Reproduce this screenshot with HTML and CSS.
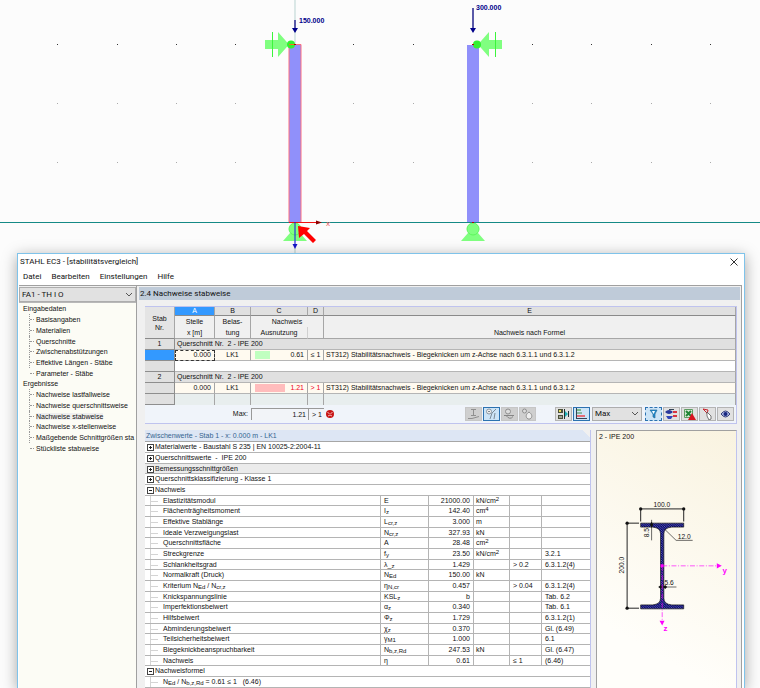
FILE: index.html
```html
<!DOCTYPE html>
<html lang="de">
<head>
  <meta charset="UTF-8" />
  <title>STAHL EC3 - [stabilitätsvergleich]</title>
  <link rel="stylesheet" href="styles.css">
</head>
<body>
  <svg class="scene" viewBox="0 0 760 253" role="img" aria-label="Modell">
    <!-- grid points -->
    <g class="grid-points">
      <path d="M57 44.500h1M117 44.500h1M176 44.500h1M235 44.500h1M353 44.500h1M413 44.500h1M532 44.500h1M591 44.500h1M651 44.500h1M710 44.500h1" />
      <path class="faint" d="M57 103.500h1M117 103.500h1M176 103.500h1M235 103.500h1M353 103.500h1M413 103.500h1M532 103.500h1M591 103.500h1M651 103.500h1M710 103.500h1" />
      <path class="faint" d="M57 162.500h1M117 162.500h1M176 162.500h1M235 162.500h1M353 162.500h1M413 162.500h1M532 162.500h1M591 162.500h1M651 162.500h1M710 162.500h1" />
    </g>
    <path d="M295 0V253" stroke="#b9d3d1" />
    <!-- loads -->
    <path d="M295 20v9M473 8v21" stroke="#5a5aa8" stroke-width="2" />
    <g fill="#00008b">
      <path d="M292 28h6l-3 5zM470 28h6l-3 5z" />
      <text class="load" x="299" y="23">150.000</text>
      <text class="load" x="476" y="10">300.000</text>
    </g>
    <!-- lower supports -->
    <g fill="#80ff80" stroke="#5df75d">
      <path stroke="none" d="M283 241l7-8h10l7 8zM461 241l7-8h10l7 8z" />
      <circle cx="295" cy="229" r="6" />
      <circle cx="473" cy="229" r="6" />
    </g>
    <!-- columns -->
    <path d="M289 45h12v177h-12z" fill="#9090fa" />
    <path d="M467 45h12v177h-12z" fill="#9090fa" />
    <path d="M289 222V44.500h12V222" fill="none" stroke="#ff6f7c" />
    <path d="M0 222.500H760" stroke="#158a86" />
    <!-- upper supports -->
    <g fill="#80ff80">
      <path d="M265 40h13v-8l11 12.500-11 12.500v-8h-13zM502 40h-13v-8l-11 12.500 11 12.500v-8h13z" />
      <path d="M272.500 32v25M495.500 32v25" stroke="#3cf53c" />
      <circle cx="291" cy="44.500" r="4" fill="#32f032" />
      <circle cx="477" cy="44.500" r="4" fill="#32f032" />
    </g>
    <path d="M289 44.500h7" stroke="#ff6a20" />
    <path d="M294 44h2v1h-2zM472 44h2v1h-2zM472 222h2v1h-2z" fill="#b00000" />
    <!-- axes -->
    <path d="M289 222.500h28" stroke="#f01010" />
    <path d="M316 220.500l6 2-6 2z" fill="#8b0000" />
    <path d="M295 222v22" stroke="#1515e8" />
    <path d="M292.500 244h5l-2.500 5z" fill="#1515c8" />
    <text class="axis" x="326" y="226">x</text>
    <path d="M298 226l12 2-3 3 9 9-3 3-9-9-5 4z" fill="#f00" />
  </svg>

  <main class="window">
    <header class="titlebar">
      <span>STAHL EC3 - [stabilitätsvergleich]</span>
      <button class="close" aria-label="Schließen">
        <svg viewBox="0 0 8 8"><path d="M0.500 0.500l7 7M7.500 0.500l-7 7" stroke="#333" /></svg>
      </button>
    </header>
    <nav class="menu">
      <a href="#">Datei</a>
      <a href="#">Bearbeiten</a>
      <a href="#">Einstellungen</a>
      <a href="#">Hilfe</a>
    </nav>

    <div class="workspace">
      <aside class="sidebar">
        <select class="case-select" aria-label="Bemessungsfall">
          <option>FA1 - TH I O</option>
        </select>
        <div class="tree">
          <h2>Eingabedaten</h2>
          <ul>
            <li><a href="#">Basisangaben</a></li>
            <li><a href="#">Materialien</a></li>
            <li><a href="#">Querschnitte</a></li>
            <li><a href="#">Zwischenabstützungen</a></li>
            <li><a href="#">Effektive Längen - Stäbe</a></li>
            <li><a href="#">Parameter - Stäbe</a></li>
          </ul>
          <h2>Ergebnisse</h2>
          <ul>
            <li><a href="#">Nachweise lastfallweise</a></li>
            <li><a href="#">Nachweise querschnittsweise</a></li>
            <li><a href="#" class="active">Nachweise stabweise</a></li>
            <li><a href="#">Nachweise x-stellenweise</a></li>
            <li><a href="#">Maßgebende Schnittgrößen sta</a></li>
            <li><a href="#">Stückliste stabweise</a></li>
          </ul>
        </div>
      </aside>

      <section class="content">
        <h1>2.4 Nachweise stabweise</h1>

        <div class="results">
          <table class="result-table">
            <colgroup>
              <col class="c-nr"><col class="c-a"><col class="c-b"><col class="c-c"><col class="c-d"><col>
            </colgroup>
            <thead>
              <tr class="letters">
                <th rowspan="3" class="nr">Stab<br>Nr.</th>
                <th class="current">A</th><th>B</th><th>C</th><th>D</th><th>E</th>
              </tr>
              <tr class="captions">
                <th>Stelle</th><th>Belas-</th><th colspan="2">Nachweis</th><th></th>
              </tr>
              <tr class="captions last">
                <th>x [m]</th><th>tung</th><th class="split">Ausnutzung</th><th></th><th>Nachweis nach Formel</th>
              </tr>
            </thead>
            <tbody>
              <tr class="group"><th>1</th><td colspan="5">Querschnitt Nr.&nbsp; 2 - IPE 200</td></tr>
              <tr class="data">
                <th class="current"></th>
                <td class="num focus">0.000</td>
                <td class="mid">LK1</td>
                <td class="num ratio ok">0.61</td>
                <td class="mid">≤ 1</td>
                <td>ST312) Stabilitätsnachweis - Biegeknicken um z-Achse nach 6.3.1.1 und 6.3.1.2</td>
              </tr>
              <tr class="blank"><th></th><td colspan="5"></td></tr>
              <tr class="group"><th>2</th><td colspan="5">Querschnitt Nr.&nbsp; 2 - IPE 200</td></tr>
              <tr class="data">
                <th></th>
                <td class="num">0.000</td>
                <td class="mid">LK1</td>
                <td class="num ratio fail">1.21</td>
                <td class="mid over">&gt; 1</td>
                <td>ST312) Stabilitätsnachweis - Biegeknicken um z-Achse nach 6.3.1.1 und 6.3.1.2</td>
              </tr>
              <tr class="empty"><th></th><td></td><td></td><td></td><td></td><td></td></tr>
            </tbody>
          </table>

          <div class="summary">
            <label for="max-ratio">Max:</label>
            <input id="max-ratio" class="max" value="1.21" readonly>
            <input class="limit" value="&gt; 1" aria-label="Grenzwert" readonly>
            <svg class="sad" viewBox="0 0 8 8">
              <circle cx="4" cy="4" r="4" fill="#c81414" />
              <path d="M1.500 2.500l2 1M6.500 2.500l-2 1M2 6q2-2 4 0" stroke="#fff" stroke-width=".7" fill="none" />
            </svg>
            <div class="tools">
              <button class="off" aria-label="Querschnitt">
                <svg viewBox="0 0 15 12"><path d="M5 1.500h5M7.500 2v5M5 7.500h5M2 10.500h4M6 10.500l7-2" stroke="#8f8f8f" fill="none" /></svg>
              </button>
              <button class="on" aria-label="Schnittgrößen">
                <svg viewBox="0 0 15 12"><circle cx="5" cy="3.500" r="2.500" fill="#eee" stroke="#8b98a3" /><path d="M4 3.500h2M6 11l2-6 4-4M10 11l1-6" stroke="#7d8b96" fill="none" /></svg>
              </button>
              <button class="off" aria-label="Stab">
                <svg viewBox="0 0 15 12"><circle cx="6" cy="3.500" r="2.500" fill="#ddd" stroke="#8f8f8f" /><path d="M2 7.500h10M4 7.500q4 5 7 1" stroke="#858585" fill="none" /></svg>
              </button>
              <button class="off" aria-label="Stabsatz">
                <svg viewBox="0 0 15 12"><circle cx="4.500" cy="3" r="2" fill="#ddd" stroke="#8f8f8f" /><path d="M8 11c-3-2-2-5 1-7 3 2 4 5 1 7z" fill="#eee" stroke="#8f8f8f" /></svg>
              </button>
              <button class="second" aria-label="Ergebnisse">
                <svg viewBox="0 0 15 12"><path d="M2 1h5v4H2zM2 7h5v4H2z" fill="#4b503a" /><path d="M3 2h2v2H3z" fill="#e8dc5a" /><path d="M3 9h3" stroke="#eee" /><path d="M8.500 1v10M12.500 3v6" stroke="#233" /><path d="M9 3l3 3-3 3z" fill="#1db2b8" /></svg>
              </button>
              <button class="on" aria-label="Ergebnisverlauf">
                <svg viewBox="0 0 15 12"><path d="M2.500 0v11" stroke="#345" /><path d="M3 1h4v2H3z" fill="#79b98b" /><path d="M3 4h5v2H3z" fill="#87b8a2" /><path d="M3 7h8v2H3z" fill="#e46e78" /><path d="M3 10.500h10" stroke="#345" /></svg>
              </button>
              <select aria-label="Filterwert"><option>Max</option></select>
              <button class="on dotted" aria-label="Filter">
                <svg viewBox="0 0 15 12"><path d="M4 2h7L9 6v4l-2-1V6z" fill="#258ed0" stroke="#19608f" stroke-width=".6" /><path d="M6 3h3L7.500 6z" fill="#fff" /></svg>
              </button>
              <button aria-label="Farbskala">
                <svg viewBox="0 0 15 12"><path d="M1 4q4-4 8 0-4 4-8 0z" fill="#29379a" /><path d="M2 8h7l-2 3H4z" fill="#3145b8" /><path d="M9 4h4M9 8h4" stroke="#d83440" stroke-width="2" /><path d="M5 1.500h5" stroke="#345" /></svg>
              </button>
              <button aria-label="Excel-Export">
                <svg viewBox="0 0 15 12"><path d="M2.500 1.500h8v8h-8z" fill="#dcebd9" stroke="#5c9c62" /><path d="M4 3l5 5M9 3L4 8" stroke="#218536" stroke-width="2" /><path d="M10 5l4 7H6z" fill="#d81420" /></svg>
              </button>
              <button aria-label="Auswahl">
                <svg viewBox="0 0 15 12"><path d="M3 1l5 1-1 4M3 1l4 4" stroke="#c8242c" fill="none" /><path d="M7 4l4 4v3l-2 1-2-4z" fill="#fff" stroke="#555" stroke-width=".8" /></svg>
              </button>
              <button aria-label="Ansicht">
                <svg viewBox="0 0 15 12"><path d="M3 6q4.500-6 9 0-4.500 6-9 0z" fill="#a7b1dd" stroke="#36427e" /><circle cx="7.500" cy="6" r="2" fill="#162680" /></svg>
              </button>
            </div>
          </div>
        </div>

        <div class="lower">
          <div class="details">
            <h2>Zwischenwerte - Stab 1 - x: 0.000 m - LK1</h2>
            <table class="detail-table">
              <colgroup>
                <col><col class="d-sym"><col class="d-val"><col class="d-unit"><col class="d-cond"><col class="d-ref">
              </colgroup>
              <tbody>
                <tr class="head"><td colspan="6"><button class="toggle" aria-label="Öffnen"></button>Materialwerte - Baustahl S 235 | EN 10025-2:2004-11</td></tr>
                <tr class="head"><td colspan="6"><button class="toggle" aria-label="Öffnen"></button>Querschnittswerte&nbsp; -&nbsp; IPE 200</td></tr>
                <tr class="head shaded"><td colspan="6"><button class="toggle" aria-label="Öffnen"></button>Bemessungsschnittgrößen</td></tr>
                <tr class="head"><td colspan="6"><button class="toggle" aria-label="Öffnen"></button>Querschnittsklassifizierung - Klasse 1</td></tr>
                <tr class="head"><td colspan="6"><button class="toggle open" aria-label="Schließen"></button>Nachweis</td></tr>
                <tr><td>Elastizitätsmodul</td><td>E</td><td>21000.00</td><td>kN/cm<sup>2</sup></td><td></td><td></td></tr>
                <tr><td>Flächenträgheitsmoment</td><td>I<sub>z</sub></td><td>142.40</td><td>cm<sup>4</sup></td><td></td><td></td></tr>
                <tr><td>Effektive Stablänge</td><td>L<sub>cr,z</sub></td><td>3.000</td><td>m</td><td></td><td></td></tr>
                <tr><td>Ideale Verzweigungslast</td><td>N<sub>cr,z</sub></td><td>327.93</td><td>kN</td><td></td><td></td></tr>
                <tr><td>Querschnittsfläche</td><td>A</td><td>28.48</td><td>cm<sup>2</sup></td><td></td><td></td></tr>
                <tr><td>Streckgrenze</td><td>f<sub>y</sub></td><td>23.50</td><td>kN/cm<sup>2</sup></td><td></td><td>3.2.1</td></tr>
                <tr><td>Schlankheitsgrad</td><td>λ_<sub>z</sub></td><td>1.429</td><td></td><td>&gt; 0.2</td><td>6.3.1.2(4)</td></tr>
                <tr><td>Normalkraft (Druck)</td><td>N<sub>Ed</sub></td><td>150.00</td><td>kN</td><td></td><td></td></tr>
                <tr><td>Kriterium N<sub>Ed</sub> / N<sub>cr,z</sub></td><td>η<sub>N,cr</sub></td><td>0.457</td><td></td><td>&gt; 0.04</td><td>6.3.1.2(4)</td></tr>
                <tr><td>Knickspannungslinie</td><td>KSL<sub>z</sub></td><td>b</td><td></td><td></td><td>Tab. 6.2</td></tr>
                <tr><td>Imperfektionsbeiwert</td><td>α<sub>z</sub></td><td>0.340</td><td></td><td></td><td>Tab. 6.1</td></tr>
                <tr><td>Hilfsbeiwert</td><td>Φ<sub>z</sub></td><td>1.729</td><td></td><td></td><td>6.3.1.2(1)</td></tr>
                <tr><td>Abminderungsbeiwert</td><td>χ<sub>z</sub></td><td>0.370</td><td></td><td></td><td>Gl. (6.49)</td></tr>
                <tr><td>Teilsicherheitsbeiwert</td><td>γ<sub>M1</sub></td><td>1.000</td><td></td><td></td><td>6.1</td></tr>
                <tr><td>Biegeknickbeanspruchbarkeit</td><td>N<sub>b,z,Rd</sub></td><td>247.53</td><td>kN</td><td></td><td>Gl. (6.47)</td></tr>
                <tr><td>Nachweis</td><td>η</td><td>0.61</td><td></td><td>≤ 1</td><td>(6.46)</td></tr>
                <tr class="head"><td colspan="6"><button class="toggle open" aria-label="Schließen"></button>Nachweisformel</td></tr>
                <tr><td colspan="6">N<sub>Ed</sub> / N<sub>b,z,Rd</sub> = 0.61 ≤ 1&nbsp;&nbsp; (6.46)</td></tr>
              </tbody>
            </table>
          </div>

          <figure class="section-view">
            <figcaption>2 - IPE 200</figcaption>
            <svg viewBox="0 60 420 600" role="img" aria-label="IPE 200">
              <defs>
                <pattern id="hatch" width="7" height="7" patternUnits="userSpaceOnUse">
                  <path d="M0 0h7v7H0z" fill="#08086e" />
                  <path d="M0 0l7 7" stroke="#9a9ad8" stroke-width="1.500" />
                </pattern>
              </defs>
              <!-- I profile -->
              <path d="M132 278h130v12h-36q-24 2-24 20v195q0 18 24 20h36v12H132v-12h36q24-2 24-20V310q0-18-24-20h-36z" fill="url(#hatch)" stroke="#111" stroke-width="2" />
              <!-- dimensions -->
              <g stroke="#222" stroke-width="3" fill="none">
                <path d="M132 273v-38h130v38" />
                <path d="M127 278H91v257h36" />
                <path d="M165 268v62M203 295l36 35h50M190 471h50" stroke-width="2" />
              </g>
              <g fill="#111">
                <circle cx="132" cy="235" r="5" /><circle cx="262" cy="235" r="5" />
                <circle cx="91" cy="278" r="5" /><circle cx="91" cy="535" r="5" />
                <path d="M160 283l5-9 5 9-5 9zM185 471l8-6 5 6-5 6zM200 471l6-6 6 6-6 6z" />
                <text class="dim" x="171" y="230">100.0</text>
                <text class="dim" x="244" y="325">12.0</text>
                <text class="dim" x="204" y="466">5.6</text>
                <text class="dim" transform="translate(83 430) rotate(-90)">200.0</text>
                <text class="dim" transform="translate(157 321) rotate(-90)">8.5</text>
              </g>
              <g stroke="#f0f" stroke-width="2" fill="#f0f">
                <path d="M197 407h164M197 407v166" stroke-dasharray="15 5 3 5" fill="none" />
                <path stroke="none" d="M362 399l15 8-15 8zM189 573h15l-7 14zM192 402h9v9h-9z" />
                <text class="axis-name" x="379" y="428">y</text>
                <text class="axis-name" x="201" y="605">z</text>
              </g>
            </svg>
          </figure>
        </div>
      </section>
    </div>
  </main>
</body>
</html>
```

FILE: styles.css
```css
* {
  box-sizing: border-box;
}
body {
  margin: 0;
  height: 100vh;
  overflow: hidden;
  display: flex;
  flex-direction: column;
  background: #fcfcfc;
  color: #111;
  font-family: "Liberation Sans", Arial, sans-serif;
  font-size: 7px;
  line-height: 10px;
}
h1, h2, figure, ul {
  margin: 0;
  padding: 0;
  font-weight: normal;
}
a {
  color: inherit;
  text-decoration: none;
}
button, input, select {
  font: inherit;
  color: inherit;
  border-radius: 0;
  margin: 0;
}
table {
  width: 100%;
  border-collapse: separate;
  border-spacing: 0;
  table-layout: fixed;
}
th, td {
  padding: 0;
  font-weight: normal;
  white-space: nowrap;
  overflow: hidden;
}

/* model view */
.scene {
  display: block;
  width: 100%;
  flex: none;
}
.grid-points path {
  stroke: #333;
}
.grid-points .faint {
  stroke: #aaa;
}
.load {
  font-size: 7px;
  font-weight: bold;
}
.axis {
  font-size: 8px;
  fill: #e55;
}

/* dialog */
.window {
  flex: 1;
  min-height: 0;
  margin: 0 15px 0 17px;
  display: flex;
  flex-direction: column;
  background: #fff;
  border: 1px solid #7fc3ea;
  border-bottom: 0;
  box-shadow: 0 3px 14px rgba(0, 0, 0, 0.35);
}
.titlebar, .menu, .case-select, .tools select, h1 {
  font-family: Roboto, "Open Sans", sans-serif;
  font-size: 8px;
}
.titlebar {
  display: flex;
  justify-content: space-between;
  align-items: center;
  height: 16px;
  padding: 0 6px 0 2px;
}
.close {
  width: 8px;
  height: 8px;
  padding: 0;
  border: 0;
  background: none;
}
.close svg {
  display: block;
}
.menu {
  display: flex;
  gap: 10px;
  height: 15px;
  padding: 2px 5px;
}
.workspace {
  flex: 1;
  min-height: 0;
  display: flex;
  margin: 0 2px 0 1px;
  border-top: 1px solid #a0a0a0;
  border-right: 1px solid #a0a0a0;
  background: #f0f0f0;
}
.sidebar {
  width: 118px;
  display: flex;
  flex-direction: column;
  padding-top: 1px;
  border-right: 1px solid #a0a0a0;
}
.case-select, .tools select {
  appearance: none;
  border: 1px solid #adadad;
  background: #e1e1e1 url("data:image/svg+xml,%3Csvg xmlns='http://www.w3.org/2000/svg' width='6' height='4'%3E%3Cpath d='M0 0l3 3 3-3' fill='none' stroke='%23555'/%3E%3C/svg%3E") no-repeat right 3px center;
}
.case-select {
  height: 15px;
  padding: 0 2px;
}
.tree {
  flex: 1;
  padding-left: 4px;
  border-top: 1px solid #b8b8b8;
  background: #fcfcf5;
  overflow: hidden;
  white-space: nowrap;
}
.tree h2 {
  font-size: 7px;
  height: 11px;
  line-height: 11px;
}
.tree ul {
  list-style: none;
  padding-left: 6px;
}
.tree li {
  position: relative;
  height: 11px;
  line-height: 11px;
  padding-left: 6px;
  border-left: 1px dotted #999;
}
.tree li:nth-child(3n) {
  height: 10px;
}
.tree li:last-child {
  border-left-color: transparent;
}
.tree li::before {
  content: "";
  position: absolute;
  left: 0;
  top: 5px;
  width: 4px;
  border-top: 1px dotted #999;
}
.tree .active {
  background: #efefef;
}
.content {
  flex: 1;
  min-width: 0;
  display: flex;
  flex-direction: column;
  padding: 1px 1px 0;
}
h1 {
  height: 13px;
  margin-left: 1px;
  padding-left: 1px;
  background: #bfcbd9;
  line-height: 13px;
}

/* results grid */
.results {
  margin: 6px 3px 6px 7px;
  border: 1px solid #bfc3ee;
  border-width: 1px 1px 1px 0;
  background: #f0f4fa;
}
.c-nr { width: 30px; }
.c-a { width: 40px; }
.c-b { width: 36px; }
.c-c { width: 57px; }
.c-d { width: 16px; }
.result-table th, .result-table td {
  height: 11px;
  line-height: 10px;
  border-right: 1px solid #a6a6a6;
  border-bottom: 1px solid #b5b5b5;
}
.result-table .letters th {
  height: 9px;
  line-height: 8px;
  background: #e0e0e0;
  border-bottom-color: #8a8a8a;
}
.result-table .nr, .result-table .letters .nr {
  background: #e4e4e4;
  line-height: 9px;
}
.result-table .captions th {
  background: #f0f0f0;
  border-bottom: 0;
}
.result-table .captions.last th {
  height: 12px;
  border-bottom: 1px solid #a6a6a6;
}
.result-table .captions.last .split {
  border-right-color: #d0d0d0;
}
.result-table tbody th {
  background: #e0e0e0;
  border-color: #8e8e8e;
}
.result-table .letters .current, .result-table tbody .current {
  background: #3399ff;
  color: #fff;
}
.result-table .group td {
  padding-left: 2px;
  background: #e0e0e0;
}
.data td {
  padding-left: 2px;
  background: #fffaf0;
}
.data .num {
  padding: 0 3px;
  text-align: right;
}
.data .mid {
  padding: 0;
  text-align: center;
}
.data .focus {
  outline: 1px dashed #333;
  outline-offset: -1px;
}
.blank td {
  background: #fff;
}
.result-table .empty td {
  background: #e8eeee;
  border-bottom: 0;
}
.data .ok {
  background: linear-gradient(#c0ffc0, #c0ffc0) 4px 1px / 15px 8px no-repeat #fffaf0;
}
.data .fail {
  background: linear-gradient(#ffbcbc, #ffbcbc) 4px 1px / 30px 8px no-repeat #fffaf0;
  color: #f00020;
}
.data .over {
  color: #f00020;
}
.summary {
  display: flex;
  align-items: center;
  height: 18px;
}
.summary label {
  width: 103px;
  text-align: right;
}
.summary input {
  height: 12px;
  padding: 0 2px;
  border: 0;
  border-top: 1px solid #999;
  border-left: 1px solid #999;
  background: #f2f4f8;
  text-align: right;
}
.summary .max {
  width: 57px;
  margin-left: 3px;
}
.summary .limit {
  width: 16px;
}
.sad {
  width: 8px;
  height: 8px;
  margin-left: 2px;
}
.tools {
  display: flex;
  gap: 1px;
  margin-left: auto;
  padding-right: 2px;
}
.tools button {
  width: 17px;
  height: 14px;
  padding: 0;
  border: 1px solid #b4b4b4;
  background: #e1e1e1;
}
.tools button svg {
  display: block;
}
.tools .off {
  background: #cfcfcf;
  border-color: #c6c6c6;
}
.tools .on {
  background: #cce4f7;
  border-color: #2c72b0;
}
.tools .dotted {
  border-style: dashed;
}
.tools .second {
  margin-left: 18px;
}
.tools select {
  width: 50px;
  margin: 0 2px 0 1px;
  padding: 0 2px;
}

/* intermediate values */
.lower {
  flex: 1;
  min-height: 0;
  display: flex;
  gap: 5px;
  margin: 0 3px 0 7px;
}
.details {
  flex: 1;
  min-width: 0;
  overflow: hidden;
  border-right: 1px solid #bfc3ee;
  background: #fff;
}
.details h2 {
  height: 12px;
  padding-left: 1px;
  border-bottom: 1px solid #a6a6a6;
  background: linear-gradient(225deg, #f0f0f0 5px, #dde6f4 5px);
  color: #35648f;
  font-size: 7px;
  line-height: 12px;
}
.d-sym { width: 48px; }
.d-val { width: 45px; }
.d-unit { width: 36px; }
.d-cond { width: 32px; }
.d-ref { width: 48px; }
.detail-table td {
  height: 11px;
  line-height: 10px;
  padding-left: 3px;
  border-right: 1px solid #b4b4b4;
  border-bottom: 1px solid #b4b4b4;
}
.detail-table tr:nth-child(3n) td {
  height: 10px;
  line-height: 9px;
}
.detail-table td:last-child {
  border-right: 0;
}
.detail-table td:first-child {
  padding-left: 18px;
  background: linear-gradient(#d4d4d4, #d4d4d4) 5px 5px / 8px 1px no-repeat,
    linear-gradient(#d4d4d4, #d4d4d4) 5px 0 / 1px 100% no-repeat;
}
.detail-table td:nth-child(3) {
  padding-right: 3px;
  text-align: right;
}
.detail-table td:nth-child(4) {
  padding-left: 2px;
}
.detail-table .head td:first-child {
  padding-left: 2px;
  background: none;
}
.detail-table .shaded td:first-child {
  background: #ebebeb;
}
.toggle {
  width: 7px;
  height: 7px;
  margin-right: 1px;
  padding: 0;
  border: 1px solid #444;
  vertical-align: middle;
  background: linear-gradient(#222, #222) center / 3px 1px no-repeat,
    linear-gradient(#222, #222) center / 1px 3px no-repeat #fff;
}
.toggle.open {
  background: linear-gradient(#222, #222) center / 3px 1px no-repeat #fff;
}
sub, sup {
  font-size: 6px;
  line-height: 0;
}
sub {
  vertical-align: -1px;
}
sup {
  vertical-align: 2px;
}

/* cross-section */
.section-view {
  width: 141px;
  border: 1px solid #a0a0a0;
  border-right-color: #bfc3ee;
  border-bottom: 0;
  background: linear-gradient(210deg, #f9f3e0, #fffefa 80%);
  overflow: hidden;
}
figcaption {
  padding: 1px 2px;
}
.section-view svg {
  display: block;
  width: 100%;
  margin-top: 8px;
}
.dim {
  font-size: 20px;
}
.axis-name {
  font-size: 24px;
  font-weight: bold;
  stroke: none;
}
```
